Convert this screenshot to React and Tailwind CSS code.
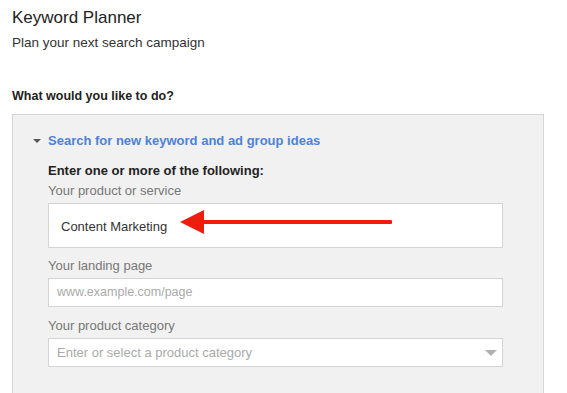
export default function App() {
  return (
    <div className="w-[567px] h-[393px] overflow-hidden bg-white font-['Liberation_Sans',Arial,sans-serif]">
      <div className="pl-[12px] pt-[7px]">
        <div className="text-[17px] leading-[22px] text-[#222]">Keyword Planner</div>
        <div className="text-[13.5px] leading-[18px] mt-[5px] text-[#333]">Plan your next search campaign</div>
        <div className="text-[12.5px] leading-[16px] font-bold text-[#222] mt-[36px]">What would you like to do?</div>
        <div className="mt-[10px] w-[532px] h-[300px] bg-[#f1f1f1] border border-[#d6d6d6] border-b-0">
          <div className="flex items-center pl-[20px] pt-[18px]">
            <svg width="8" height="5" viewBox="0 0 8 5" className="mr-[7px]">
              <path d="M0 0 L8 0 L4 4 Z" fill="#555" />
            </svg>
            <span className="text-[13px] leading-[16px] font-bold text-[#4d82d6]">Search for new keyword and ad group ideas</span>
          </div>
          <div className="pl-[35px] pt-[14px] w-[490px]">
            <div className="text-[13px] leading-[16px] font-bold text-[#222]">Enter one or more of the following:</div>
            <div className="text-[13px] leading-[16px] text-[#777] mt-[4px]">Your product or service</div>
            <div className="relative mt-[4px] h-[45px] bg-white border border-[#d4d4d4] flex items-center pl-[12px]">
              <span className="text-[13px] text-[#333] mt-[2px]">Content Marketing</span>
              <svg className="absolute left-[131px] top-[5px]" width="214" height="28" viewBox="0 0 214 28">
                <path d="M0 13 L24 1 L24 25 Z" fill="#f01c0c" />
                <rect x="22" y="11" width="190" height="4" rx="1" fill="#f01c0c" />
              </svg>
            </div>
            <div className="text-[13px] leading-[16px] text-[#777] mt-[10px]">Your landing page</div>
            <div className="mt-[4px] h-[29px] bg-white border border-[#d4d4d4] flex items-center pl-[8px]">
              <span className="text-[12.5px] text-[#aaa]">www.example.com/page</span>
            </div>
            <div className="text-[13px] leading-[16px] text-[#777] mt-[11px]">Your product category</div>
            <div className="mt-[4px] h-[29px] bg-white border border-[#d4d4d4] flex items-center justify-between pl-[8px] pr-[5px]">
              <span className="text-[13px] text-[#aaa]">Enter or select a product category</span>
              <svg width="12" height="6" viewBox="0 0 12 6">
                <path d="M0 0 L12 0 L6 6 Z" fill="#b0b0b0" />
              </svg>
            </div>
          </div>
        </div>
      </div>
    </div>
  );
}
